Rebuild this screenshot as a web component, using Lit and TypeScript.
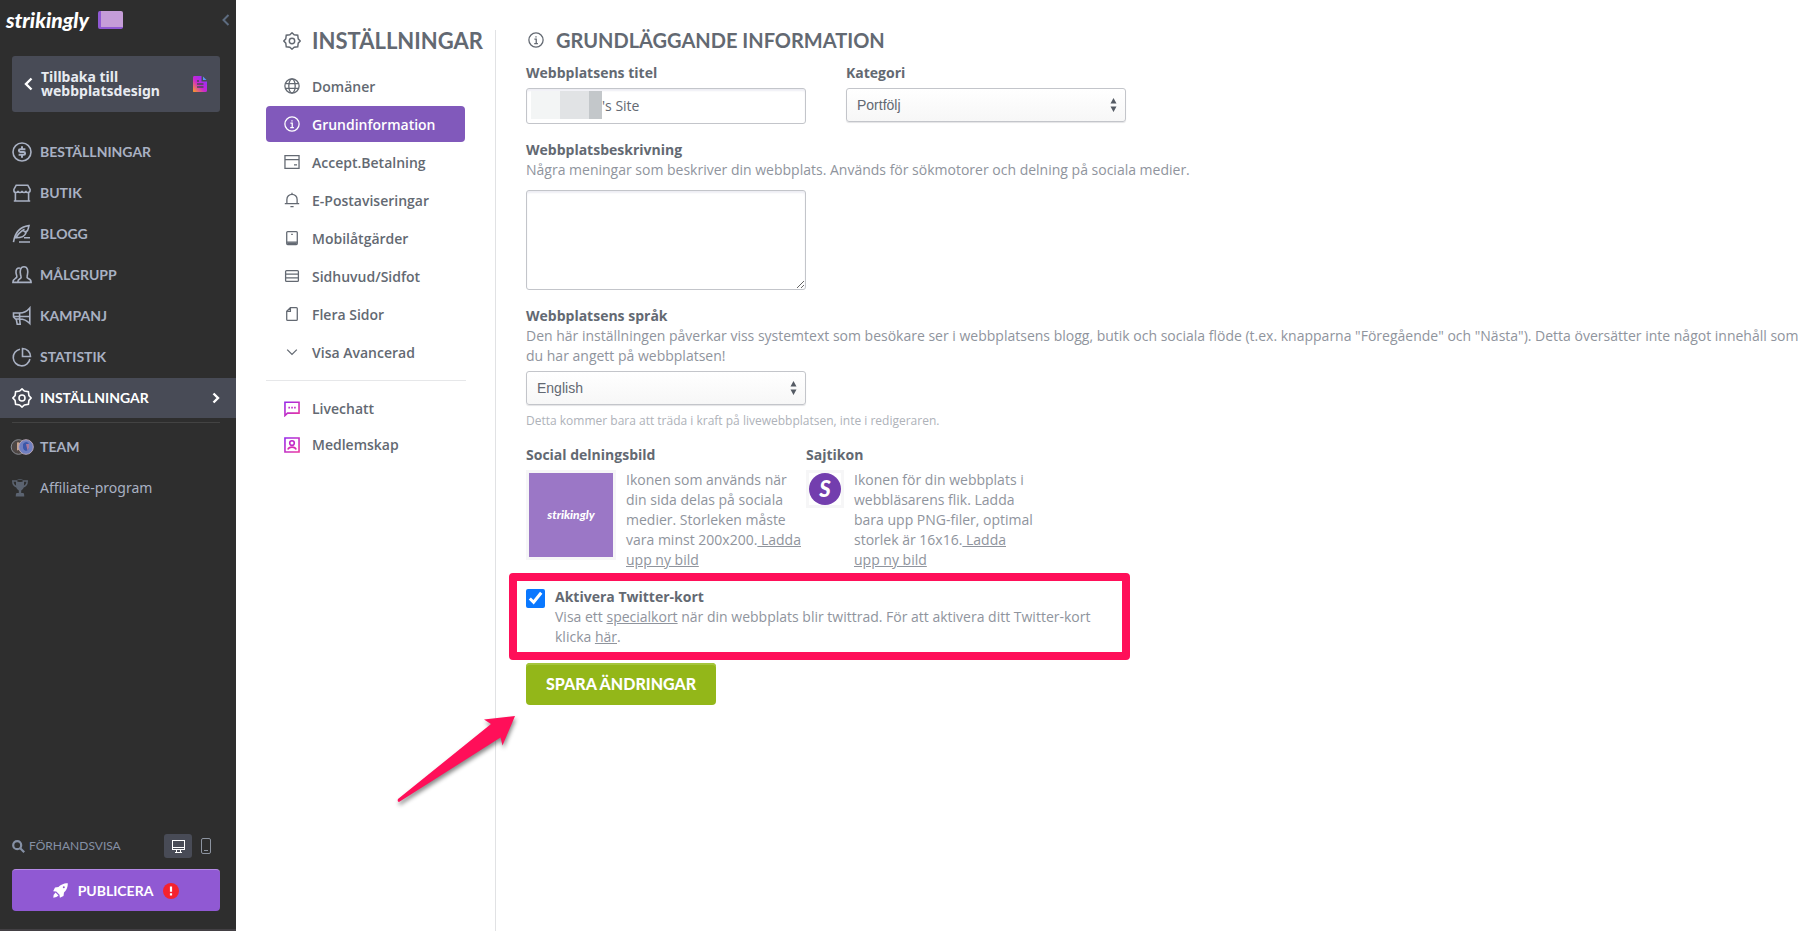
import { LitElement, html, css, svg, TemplateResult } from "lit";
import { customElement, state } from "lit/decorators.js";
import { classMap } from "lit/directives/class-map.js";

interface Item {
  id: string;
  label: string;
  icon: TemplateResult;
}

const icon = (content: TemplateResult, size = 20) =>
  html`<svg class="icon" width=${size} height=${size} viewBox="0 0 20 20" fill="none" stroke="currentColor" stroke-width="1.6" aria-hidden="true">${content}</svg>`;

const gearPath =
  "M10 .9 12.4 3.1 16.4 3.6 16.9 7.6 19.1 10 16.9 12.4 16.4 16.4 12.4 16.9 10 19.1 7.6 16.9 3.6 16.4 3.1 12.4 .9 10 3.1 7.6 3.6 3.6 7.6 3.1Z";

const glyphs = {
  dollar: svg`<circle cx="10" cy="10" r="9"/><path d="M13.400 7.200H8.300a1.400 1.400 0 0 0 0 2.800h3.400a1.400 1.400 0 0 1 0 2.800H6.600M10 4.200v3M10 12.800v3" stroke-width="2"/>`,
  shop: svg`<path d="M4.200 2.200h11.600l2.300 4.200v1.200q0 1.900-2.100 1.900t-2-1.700q0 1.700-2 1.700t-2-1.700q0 1.700-2 1.700t-2-1.700q0 1.700-2 1.700T1.900 7.600V6.400ZM3.400 9.500v8.300M16.600 9.500v8.300M1.800 18h16.400"/>`,
  quill: svg`<path d="M1.500 18.200C2.500 11 5.500 3 17 1.600C16 5 16.500 6 14.500 7.500H12.500L14 8.700C13 12 10 13.800 4 13.800M12.500 5.200C8 7.800 5 11.500 3.500 14.500M12 13.800H18M7 18H18"/>`,
  people: svg`<path d="M8.300 13.500C10 12.600 9 11.600 8.600 10C7.800 6.500 8 1.800 12 1.800s4.200 4.700 3.400 8.200c-.4 1.600-1 2.500.6 3.400c2 .8 3.100 1.100 3.100 4H5.700c0-2.900 1-3.100 2.600-3.900ZM8.200 3.200C5 2.500 3.800 4.800 4 7.500c.1 2 1 3 .8 4.500c-.3 1.700-3.900 1.300-3.900 5.400h4.800"/>`,
  horn: svg`<path d="M1.500 7h6c4 0 7.500-1.600 10.300-5v15.500c-2.800-3-6.300-4.500-10.300-4.500h-4L1.500 11ZM1.500 10.500h16M7.600 7v6M4.200 13l1 5.200h3l-.6-5.200"/>`,
  pie: svg`<path d="M8 2.200A8.400 8.400 0 1 0 17.900 12M10.500 1.500v8h8a8 8 0 0 0-8-8Z"/>`,
  gear: svg`<path d=${gearPath}/><circle cx="10" cy="10" r="3"/>`,
  globe: svg`<circle cx="10" cy="10" r="8.900"/><ellipse cx="10" cy="10" rx="4" ry="8.900"/><path d="M1.500 7h17M1.500 13h17"/>`,
  info: svg`<circle cx="10" cy="10" r="8.900"/><path d="M8 9h2.300v5.500M7.800 14.600h4.600M9.200 6h1.600"/>`,
  card: svg`<path d="M1.200 2h17.600v16H1.200ZM1.200 7h17.600M12.500 13.500h3.800"/>`,
  bell: svg`<path d="M1 14.500h18M3.600 14.500V9.300a6.400 6.400 0 0 1 12.800 0v5.200M10 2.900V.8M8 18.200h4"/>`,
  mobile: svg`<rect x="3.400" y="2" width="13.200" height="16.200" rx="1.200"/><path d="M3.400 15.200h13.200M9 5.600h2"/><path d="M4 16.700h12" stroke-width="2"/>`,
  rows: svg`<rect x="2" y="3.200" width="16" height="13.600" rx="1.200"/><path d="M2 7.700h16M2 12.300h16"/>`,
  page: svg`<path d="M8 2h7.400q1.200 0 1.200 1.200v13.600q0 1.200-1.200 1.200H4.600q-1.200 0-1.200-1.200V6.600ZM8 2v4.600H3.400"/>`,
  down: svg`<path d="m4 7 6 6 6-6"/>`,
  chat: svg`<path d="M1.200 18.200V1.500h17.600v13.700H4.400Z" stroke="url(#pinkFade)" stroke-width="2"/><path d="M5.500 8.300h1.900M9.100 8.300H11M12.700 8.300h1.900" stroke="#c028c8" stroke-width="2"/>`,
  member: svg`<path d="M1.200 1.200h17.600v17.600H1.200Z" stroke="url(#pinkFade)" stroke-width="2"/><circle cx="10" cy="7.500" r="2.900" stroke="#c028c8" stroke-width="2"/><path d="M4.800 15.600q1-3 5.200-3t5.200 3" stroke="#d82ab4" stroke-width="2"/>`,
};

const mainNav: Item[] = [
  { id: "orders", label: "BESTÄLLNINGAR", icon: glyphs.dollar },
  { id: "shop", label: "BUTIK", icon: glyphs.shop },
  { id: "blog", label: "BLOGG", icon: glyphs.quill },
  { id: "audience", label: "MÅLGRUPP", icon: glyphs.people },
  { id: "campaign", label: "KAMPANJ", icon: glyphs.horn },
  { id: "stats", label: "STATISTIK", icon: glyphs.pie },
  { id: "settings", label: "INSTÄLLNINGAR", icon: glyphs.gear },
];

const settingsNav: Item[] = [
  { id: "domains", label: "Domäner", icon: glyphs.globe },
  { id: "basic", label: "Grundinformation", icon: glyphs.info },
  { id: "payments", label: "Accept.Betalning", icon: glyphs.card },
  { id: "email", label: "E-Postaviseringar", icon: glyphs.bell },
  { id: "mobile", label: "Mobilåtgärder", icon: glyphs.mobile },
  { id: "headfoot", label: "Sidhuvud/Sidfot", icon: glyphs.rows },
  { id: "pages", label: "Flera Sidor", icon: glyphs.page },
  { id: "advanced", label: "Visa Avancerad", icon: glyphs.down },
];

const extraNav: Item[] = [
  { id: "chat", label: "Livechatt", icon: glyphs.chat },
  { id: "members", label: "Medlemskap", icon: glyphs.member },
];

@customElement("site-sidebar")
export class SiteSidebar extends LitElement {
  static styles = css`
    :host { display: flex; flex-direction: column; background: #2e2e2e; color: #a9b1c3; font-family: Lato, sans-serif; box-sizing: border-box; }
    * { box-sizing: border-box; }
    a { color: inherit; text-decoration: none; }
    button { font: inherit; border: 0; margin: 0; cursor: pointer; }
    .icon { display: block; flex: none; }
    .top { display: flex; align-items: center; height: 40px; padding: 0 4px 0 6px; }
    .logo { color: #fff; font-size: 21px; font-weight: 900; font-style: italic; line-height: 24px; width: 92px; }
    .plan { width: 25px; height: 18px; background: #c59dd8; border-left: 3px solid #9059d3; border-bottom: 2px solid #9059d3; border-radius: 2px; }
    .fold { margin-left: auto; background: none; color: #5d6c80; padding: 0; }
    .back { display: flex; align-items: center; margin: 16px 16px 20px 12px; height: 56px; padding: 0 12px; gap: 8px; border-radius: 3px; background: #484b56; color: #e8ebf1; font-family: "Noto Sans", sans-serif; font-size: 14px; line-height: 14px; font-weight: 700; }
    .back .doc { margin-left: auto; }
    nav { display: flex; flex-direction: column; gap: 1px; }
    .row { display: flex; align-items: center; height: 40px; padding: 0 16px 0 12px; gap: 8px; font-size: 14px; font-weight: 700; }
    .row.on { background: #484b56; color: #fff; }
    .row .go { margin-left: auto; }
    .rule { height: 1px; margin: 4px 16px 4px 12px; background: #434343; }
    .plain { font-family: "Noto Sans", sans-serif; font-weight: 400; }
    .foot { margin-top: auto; padding: 0 16px 18px 12px; border-bottom: 2px solid #434044; }
    .preview { display: flex; align-items: center; justify-content: space-between; height: 24px; margin-bottom: 11px; font-size: 12px; color: #8590a5; }
    .look { display: flex; align-items: center; gap: 4px; }
    .devices { display: flex; align-items: center; }
    .device { display: grid; place-items: center; width: 28px; height: 24px; padding: 0; border-radius: 3px; background: none; color: #8d94a0; }
    .device.on { background: #484b56; color: #fff; }
    .publish { display: flex; align-items: center; justify-content: center; gap: 10px; width: 100%; height: 42px; border-radius: 4px; background: #9059d3; border-top: 1px solid #b58ae6; color: #fff; font-size: 14px; font-weight: 700; }
  `;

  @state() private current = "settings";

  render() {
    return html`
      <div class="top">
        <span class="logo">strikingly</span>
        <span class="plan"></span>
        <button class="fold" aria-label="Fäll ihop">
          <svg class="icon" width="12" height="14" viewBox="0 0 12 14" fill="none" stroke="currentColor" stroke-width="2"><path d="M8.500 2 3.500 7l5 5"/></svg>
        </button>
      </div>
      <a class="back" href="#design">
        <svg class="icon" width="9" height="14" viewBox="0 0 9 14" fill="none" stroke="#fff" stroke-width="2.400"><path d="M7.500 1.500 2 7l5.500 5.500"/></svg>
        <span>Tillbaka till<br>webbplatsdesign</span>
        <svg class="icon doc" width="16" height="18" viewBox="0 0 16 18">
          <defs><linearGradient id="docFade" x1="0" y1="1" x2="1" y2="0"><stop offset="0" stop-color="#ffa01e"/><stop offset=".45" stop-color="#c926d2"/><stop offset=".75" stop-color="#a22cf0"/><stop offset="1" stop-color="#3ea5f5"/></linearGradient></defs>
          <path fill="url(#docFade)" d="M2 1h7.500v5.500h5.500v9q0 1.500-1.500 1.500h-12Q1 17 1 16V2.500Q1 1 2 1Z"/>
          <path fill="#5a96f0" d="M11 1.500 14.500 5H11Z"/>
          <path stroke="#484b56" stroke-width="1.500" d="M5 6h2M5 9h6.500M5 12h6.500"/>
        </svg>
      </a>
      <nav>
        ${mainNav.map(
          (i) => html`<a class=${classMap({ row: true, on: i.id === this.current })} href="#${i.id}">
            ${icon(i.icon)}<span>${i.label}</span>
            ${i.id === this.current
              ? html`<svg class="icon go" width="8" height="12" viewBox="0 0 8 12" fill="none" stroke="currentColor" stroke-width="2.400"><path d="m1.500 1.500 4.500 4.500-4.500 4.500"/></svg>`
              : ""}
          </a>`
        )}
      </nav>
      <div class="rule"></div>
      <nav>
        <a class="row" href="#team">
          <svg class="icon" width="20" height="20" viewBox="0 0 20 20" overflow="visible">
            <circle cx="6.500" cy="10" r="7.300" fill="#4d4644" stroke="#8a8d94"/>
            <path d="M5 5.500q3-1 3.500 3l-.5 4-3 1Z" fill="#c9a48c"/>
            <circle cx="14" cy="10" r="7.300" fill="#6f7fc0" stroke="#b8a5b4"/>
            <path d="M11 7q3.500-4 6 0v4q-1 3-3 3t-3-3Z" fill="#3c57a8"/>
            <path d="M14 7h3v4l-1.500 2.500Z" fill="#a77aa0"/>
          </svg>
          <span>TEAM</span>
        </a>
        <a class="row plain" href="#affiliate">
          <svg class="icon" width="20" height="20" viewBox="0 0 20 20" fill="#5b6370">
            <path d="M4 2.500Q8-.5 12 2.500V7q0 4-2.800 5.500V15h2.300q.8.500.8 3.500H3.700q0-3 .8-3.500h2.300v-2.500Q4 11 4 7Z"/>
            <path d="M4 3H.8Q.8 8 5.500 9M12 3h3.200q0 5-4.700 6" fill="none" stroke="#5b6370" stroke-width="1.500"/>
            <ellipse cx="8" cy="2.900" rx="3" ry="1.100" fill="#2e2e2e"/>
          </svg>
          <span>Affiliate-program</span>
        </a>
      </nav>
      <div class="foot">
        <div class="preview">
          <span class="look">
            <svg class="icon" width="13" height="13" viewBox="0 0 13 13" fill="none" stroke="currentColor" stroke-width="2.200"><circle cx="5.200" cy="5.200" r="4"/><path d="m8.200 8.200 4 4"/></svg>
            <span>FÖRHANDSVISA</span>
          </span>
          <span class="devices">
            <button class="device on" aria-label="Dator">
              <svg class="icon" width="13" height="13" viewBox="0 0 13 13" fill="none" stroke="currentColor"><rect x=".5" y=".5" width="12" height="9"/><path d="M1 7.500h11M4.500 9.500v3M8.500 9.500v3M3 12.500h7"/></svg>
            </button>
            <button class="device" aria-label="Mobil">
              <svg class="icon" width="10" height="16" viewBox="0 0 10 16" fill="none" stroke="currentColor"><rect x=".5" y=".5" width="9" height="15" rx="1.500"/><path d="M3 12.500h4"/></svg>
            </button>
          </span>
        </div>
        <button class="publish">
          <svg class="icon" width="15" height="15" viewBox="0 0 15 15" fill="#fff"><path d="M14.800.2C10 .2 7.500 2 5.500 4L2 4.500 .2 8.200l3 .3 3.300 3.300.4 3L10.500 13l.5-3.500C13 7.500 14.800 5 14.800.2Z"/><path d="M2.500 9.500Q.5 11 .3 14.700 4 14.500 5.500 12.500Z"/><circle cx="10.800" cy="4.200" r="1" fill="#9059d3"/></svg>
          <span>PUBLICERA</span>
          <svg class="icon" width="16" height="16" viewBox="0 0 16 16"><circle cx="8" cy="8" r="8" fill="#f5222d"/><path d="M8 3.500v5.300M8 10.300v2.200" stroke="#fff" stroke-width="2.200"/></svg>
        </button>
      </div>
    `;
  }
}

@customElement("app-root")
export class AppRoot extends LitElement {
  static styles = css`
    :host { display: grid; grid-template-columns: 236px 260px minmax(0, 1fr); min-height: 100vh; background: #fff; color: #636972; font-family: "Open Sans", sans-serif; font-size: 14px; line-height: 20px; }
    * { box-sizing: border-box; }
    a { color: inherit; }
    button { font: inherit; border: 0; margin: 0; cursor: pointer; }
    h1, h2, h3, p { margin: 0; }
    .icon { display: block; flex: none; }
    .menu { margin-top: 30px; padding-left: 30px; border-right: 1px solid #e1e2e4; }
    .title { display: flex; align-items: center; font-family: Lato, sans-serif; font-weight: 700; font-size: 22px; line-height: 22px; gap: 11px; padding-left: 17px; }
    .items { display: flex; flex-direction: column; gap: 2px; width: 200px; }
    .items.main { margin-top: 16px; padding-bottom: 10px; border-bottom: 1px solid #e6e7e9; }
    .items.extra { margin-top: 10px; gap: 0; }
    .entry { display: flex; align-items: center; gap: 12px; height: 36px; width: 199px; padding: 0 18px; border-radius: 4px; text-decoration: none; font-weight: 600; line-height: 22px; }
    .main .entry span { padding-top: 2px; }
    .entry.on { background: #8159bb; color: #fff; }
    .page { padding: 30px 8px 0 30px; }
    .page .title { padding-left: 2px; font-size: 20px; line-height: 20px; gap: 12px; }
    .field { display: flex; flex-direction: column; }
    .label { font-size: 14px; font-weight: 700; }
    .note { color: #8f949d; }
    .hint { color: #aeb2b9; font-size: 12px; margin-top: 6px; }
    .pair { display: flex; gap: 40px; align-items: flex-start; margin-top: 13px; }
    .box { width: 280px; height: 36px; margin-top: 5px; border: 1px solid #c3c5ca; border-radius: 3px; box-shadow: inset 0 2px 2px #eeeef4; color: #636972; background: #fff; font: inherit; }
    .wrap { position: relative; display: flex; }
    .wrap .box { padding: 0 10px 2px 75px; }
    .mask { position: absolute; left: 5px; top: 8px; width: 71px; height: 28px; background: linear-gradient(90deg, #f3f5f5 29px, #e1e3e5 29px 58px, #c3c7ca 58px); }
    .area { display: block; height: 100px; margin-top: 10px; resize: vertical; }
    .pick { position: relative; width: 280px; }
    .pick select { appearance: none; display: block; width: 100%; height: 34px; margin-top: 5px; padding: 0 10px; border: 1px solid #c3c5ca; border-radius: 3px; background: linear-gradient(#fff, #f7f7f7); box-shadow: 0 1px 1px #e4e4e6; color: #636972; font-family: "Liberation Sans", sans-serif; font-size: 14px; }
    .pick .arrows { position: absolute; right: 9px; bottom: 9px; pointer-events: none; }
    .gap { margin-top: 16px; }
    .assets { display: flex; margin-top: 14px; }
    .asset { width: 280px; }
    .asset .row { display: flex; gap: 10px; align-items: flex-start; margin-top: 5px; }
    .frame { flex: none; display: grid; place-items: center; border: 3px solid #f6f6f7; }
    .social { width: 90px; height: 90px; background: #9b77c6; color: #fff; font-family: Lato, sans-serif; font-weight: 900; font-style: italic; font-size: 12px; }
    .fav { width: 38px; height: 38px; }
    .fav span { display: grid; place-items: center; width: 32px; height: 32px; border-radius: 50%; background: #733eae; color: #fff; font-family: Lato, sans-serif; font-weight: 900; font-style: italic; font-size: 22px; }
    .copy { width: 180px; }
    .twitter { position: relative; display: flex; gap: 10px; width: 600px; margin-top: 17px; align-items: flex-start; }
    .twitter input { flex: none; width: 19px; height: 19px; margin: 2px 0 0; accent-color: #0a78ff; }
    .ring { position: absolute; inset: -14px -4px -13px -17px; border: 8px solid #ff0f59; border-radius: 4px; pointer-events: none; }
    .save { display: block; height: 42px; margin-top: 16px; padding: 0 20px; border-radius: 4px; background: #93b719; box-shadow: inset 0 2px 0 #a5c63c; color: #fff; font-family: Lato, sans-serif; font-weight: 900; font-size: 16px; }
    .action { position: relative; }
    .arrow { position: absolute; left: -132px; top: 50px; pointer-events: none; filter: drop-shadow(1px 3px 2px #0007); }
    .defs { position: absolute; }
  `;

  @state() private section = "basic";

  private entries(list: Item[]) {
    return list.map(
      (i) => html`<a class=${classMap({ entry: true, on: i.id === this.section })} href="#${i.id}">${icon(i.icon, 16)}<span>${i.label}</span></a>`
    );
  }

  private picker(id: string, value: string) {
    return html`<div class="pick">
      <select id=${id}><option>${value}</option></select>
      <svg class="icon arrows" width="7" height="16" viewBox="0 0 7 16" fill="#555b64"><path d="M3.500 1 6.500 6.500H.5ZM3.500 15 .5 9.500h6Z"/></svg>
    </div>`;
  }

  render() {
    return html`
      <site-sidebar></site-sidebar>
      <section class="menu">
        <h1 class="title">${icon(glyphs.gear, 18)}<span>INSTÄLLNINGAR</span></h1>
        <nav class="items main">${this.entries(settingsNav)}</nav>
        <nav class="items extra">
          ${this.entries(extraNav)}
          <svg class="defs" width="0" height="0" aria-hidden="true"><defs><linearGradient id="pinkFade" gradientUnits="userSpaceOnUse" x1="0" y1="0" x2="20" y2="20"><stop offset="0" stop-color="#9328ee"/><stop offset="1" stop-color="#f0389c"/></linearGradient></defs></svg>
        </nav>
      </section>
      <main class="page">
        <h2 class="title">${icon(glyphs.info, 16)}<span>GRUNDLÄGGANDE INFORMATION</span></h2>
        <div class="pair">
          <div class="field">
            <label class="label" for="title">Webbplatsens titel</label>
            <div class="wrap"><input class="box" id="title" type="text" value="'s Site"><span class="mask"></span></div>
          </div>
          <div class="field">
            <label class="label" for="category">Kategori</label>
            ${this.picker("category", "Portfölj")}
          </div>
        </div>
        <div class="field gap">
          <label class="label" for="description">Webbplatsbeskrivning</label>
          <p class="note">Några meningar som beskriver din webbplats. Används för sökmotorer och delning på sociala medier.</p>
          <textarea class="box area" id="description"></textarea>
        </div>
        <div class="field gap">
          <label class="label" for="language">Webbplatsens språk</label>
          <p class="note">Den här inställningen påverkar viss systemtext som besökare ser i webbplatsens blogg, butik och sociala flöde (t.ex. knapparna "Föregående" och "Nästa"). Detta översätter inte något innehåll som du har angett på webbplatsen!</p>
          ${this.picker("language", "English")}
          <p class="hint">Detta kommer bara att träda i kraft på livewebbplatsen, inte i redigeraren.</p>
        </div>
        <div class="assets">
          <div class="asset">
            <h3 class="label">Social delningsbild</h3>
            <div class="row">
              <div class="frame social">strikingly</div>
              <p class="note copy">Ikonen som används när din sida delas på sociala medier. Storleken måste vara minst 200x200.<a href="#social"> Ladda upp ny bild</a></p>
            </div>
          </div>
          <div class="asset">
            <h3 class="label">Sajtikon</h3>
            <div class="row">
              <div class="frame fav"><span>S</span></div>
              <p class="note copy">Ikonen för din webbplats i webbläsarens flik. Ladda bara upp PNG-filer, optimal storlek är 16x16.<a href="#favicon"> Ladda upp ny bild</a></p>
            </div>
          </div>
        </div>
        <div class="twitter">
          <input type="checkbox" id="card" checked>
          <div>
            <label class="label" for="card">Aktivera Twitter-kort</label>
            <p class="note">Visa ett <a href="#special">specialkort</a> när din webbplats blir twittrad. För att aktivera ditt Twitter-kort klicka <a href="#here">här</a>.</p>
          </div>
          <div class="ring"></div>
        </div>
        <div class="action">
          <button class="save">SPARA ÄNDRINGAR</button>
          <svg class="arrow" width="124" height="92" viewBox="0 0 124 92" fill="#ff0f59"><path d="M121 3 90 6.500 97 11 4 86Q3 88.500 5 89L106.500 24.500 108.500 32.500Z"/></svg>
        </div>
      </main>
    `;
  }
}
